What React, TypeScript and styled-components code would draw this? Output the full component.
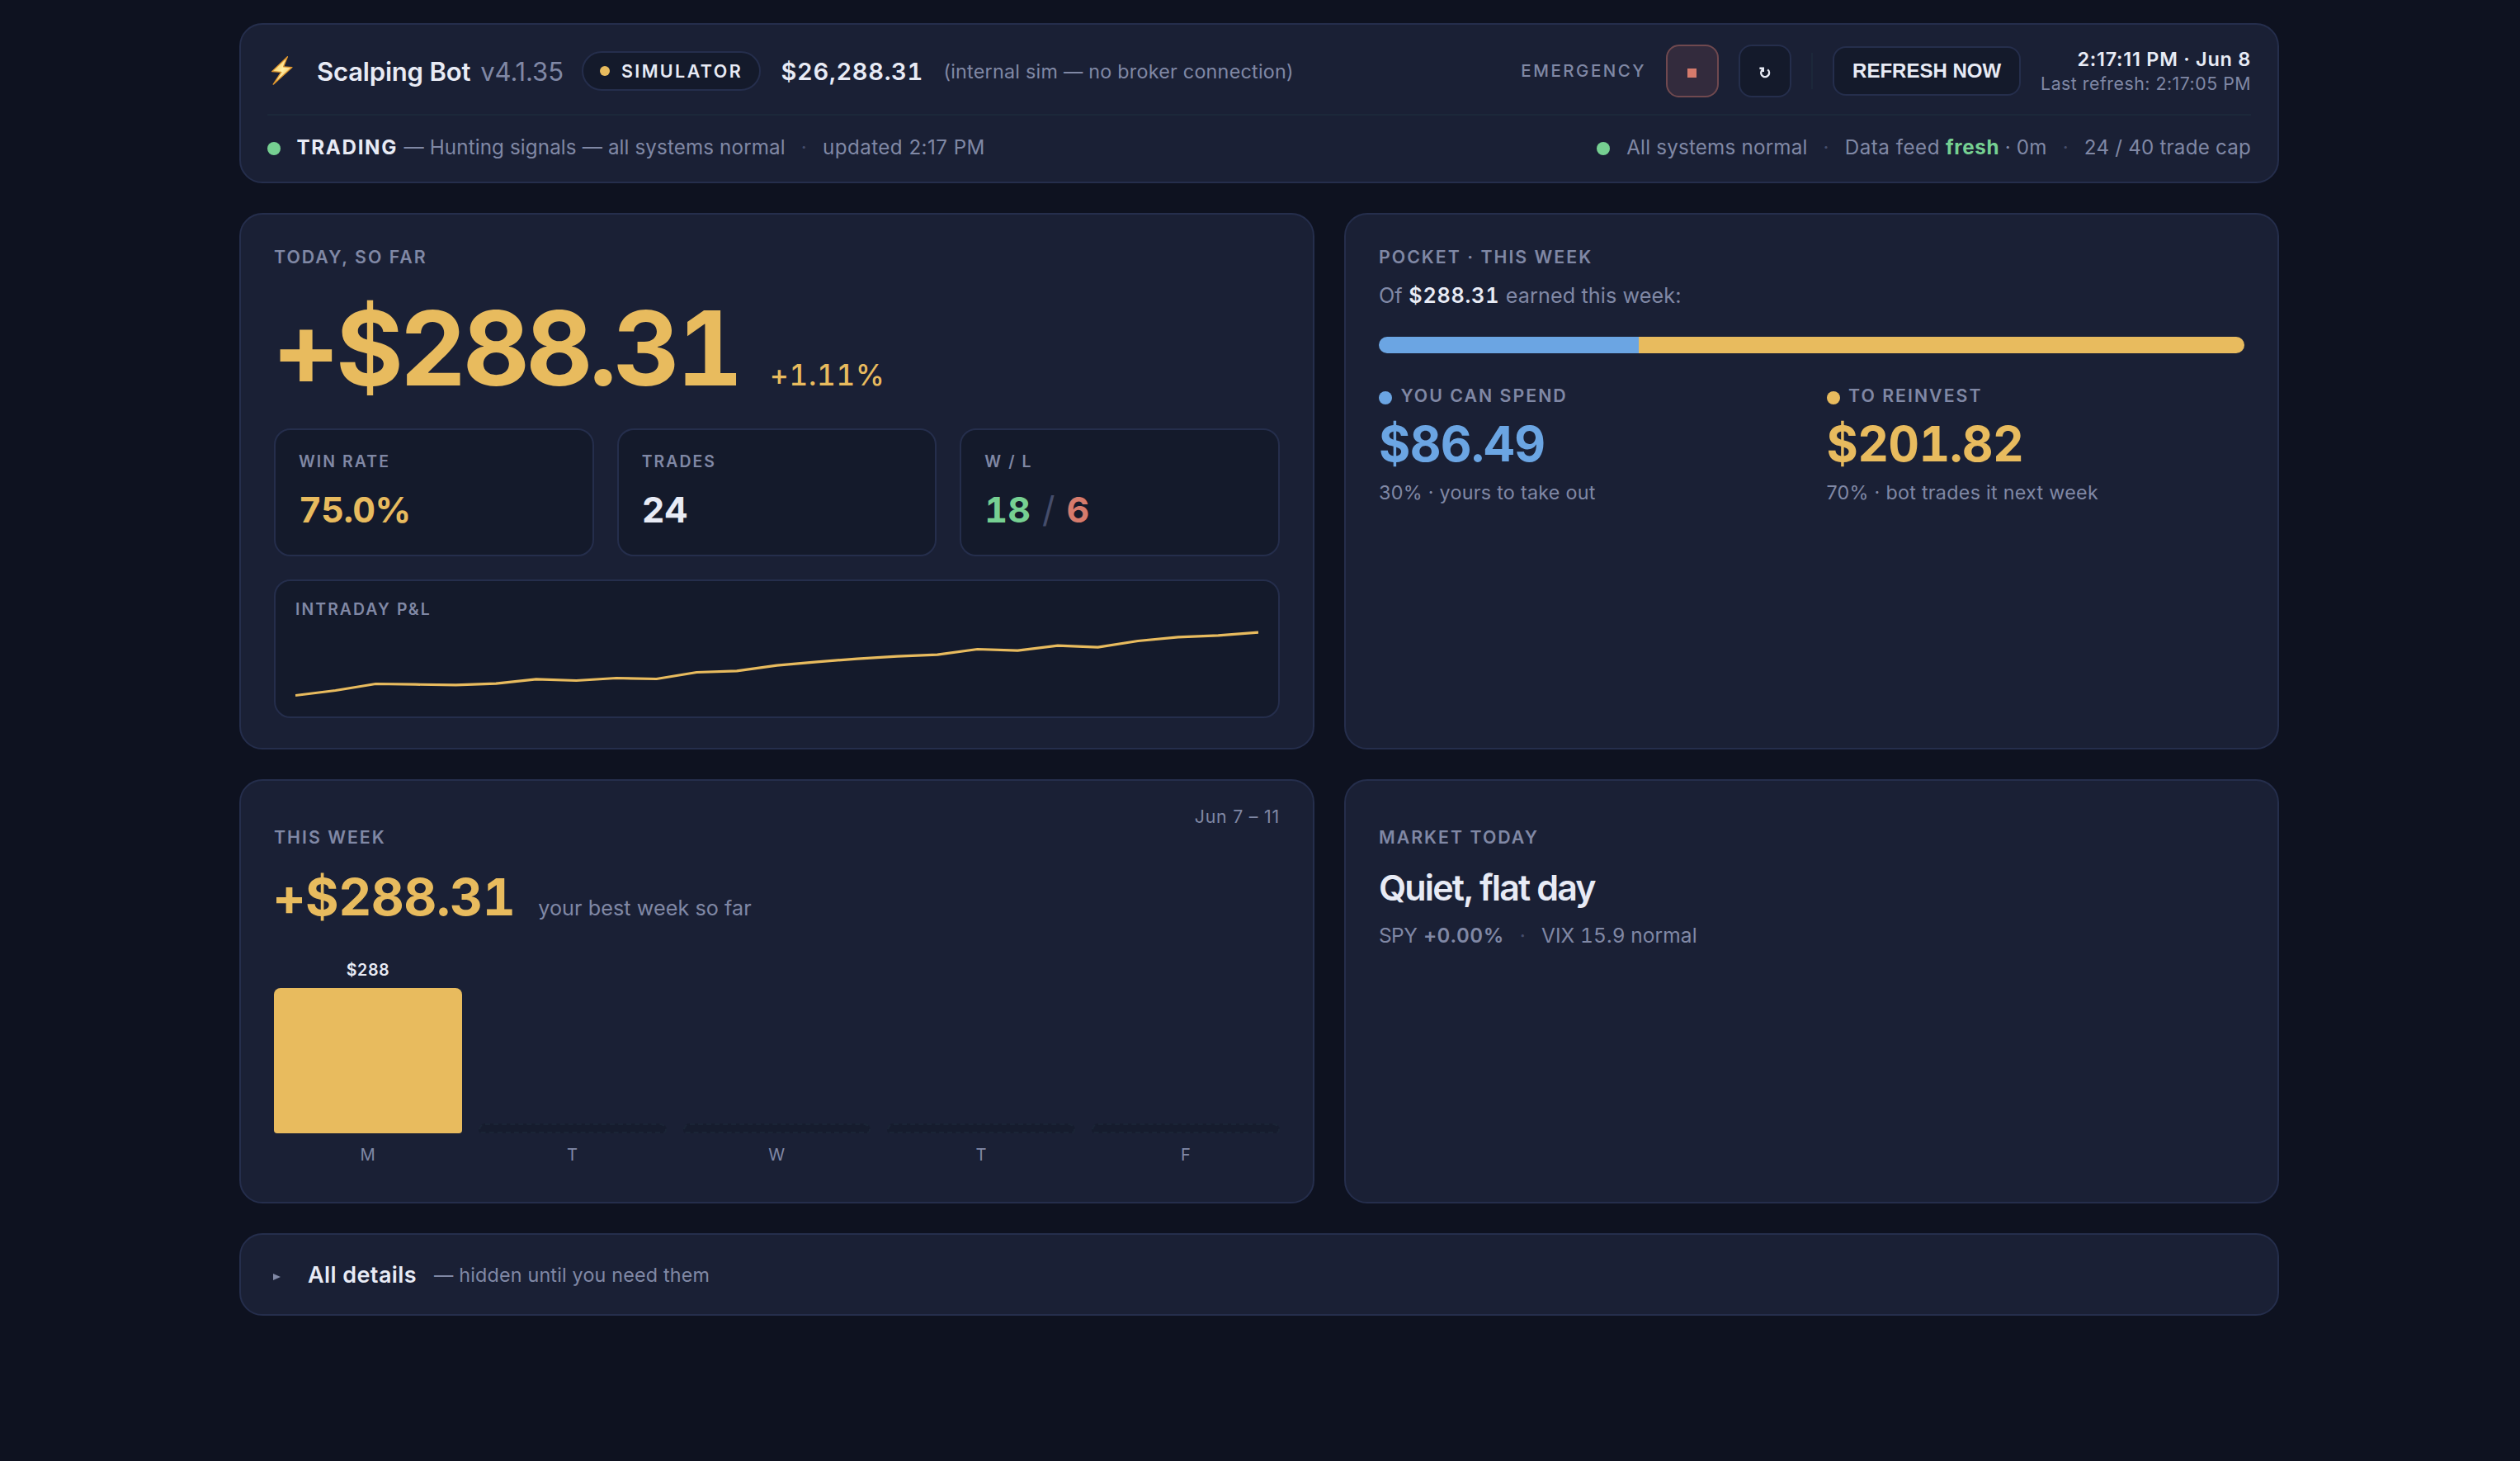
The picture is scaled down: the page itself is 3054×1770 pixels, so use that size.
import React from "react";
import styled, { createGlobalStyle, css } from "styled-components";

const c = {
  page: "#0e1220",
  card: "#1a2035",
  inset: "#141a2b",
  border: "#252e4c",
  hairline: "#1c283a",
  text: "#e8ebf5",
  muted: "#8088a5",
  faint: "#454d6b",
  gold: "#e8bb5e",
  blue: "#6ba5e3",
  green: "#76d092",
  red: "#d67b6c",
};

const type = (size: number, weight: number, spacing: number, line: number) => css`
  font-size: ${size}px;
  font-weight: ${weight};
  letter-spacing: ${spacing}px;
  line-height: ${line}px;
`;

const GlobalStyle = createGlobalStyle`
  * { box-sizing: border-box; }
  body {
    margin: 0;
    background: ${c.page};
    color: ${c.text};
    font-family: Inter, "Liberation Sans", sans-serif;
    -webkit-font-smoothing: antialiased;
  }
`;

const Page = styled.main`
  width: 2472px;
  min-height: 1770px;
  margin: 0 0 0 290px;
  padding-top: 28px;
  display: flex;
  flex-direction: column;
  gap: 36px;
  white-space: nowrap;
`;

const Card = styled.section<{ $height: number; $top: number }>`
  height: ${(p) => p.$height}px;
  padding: ${(p) => p.$top}px 40px 0;
  background: ${c.card};
  border: 2px solid ${c.border};
  border-radius: 28px;
`;

const Columns = styled.div`
  display: grid;
  grid-template-columns: 1303px 1133px;
  gap: 36px;
`;

/* Header */

const Header = styled.header`
  height: 194px;
  padding: 24px 32px 0;
  background: ${c.card};
  border: 2px solid ${c.border};
  border-radius: 28px;
`;

const HeaderRow = styled.div`
  display: flex;
  align-items: center;
  justify-content: space-between;
  height: 64px;
`;

const StatusRow = styled(HeaderRow)`
  height: 58px;
  margin-top: 20px;
  padding-top: 20px;
  border-top: 2px solid ${c.hairline};
  ${type(24.2, 400, 0.2, 37)}
  color: ${c.muted};
`;

const Cluster = styled.div`
  display: flex;
  align-items: center;
`;

const Actions = styled(Cluster)`
  gap: 24px;
`;

const Title = styled.h1`
  margin: 1px 0 0 25px;
  ${type(31, 600, -0.18, 40)}
`;

const Version = styled.span`
  margin: 1px 22.5px 0 12px;
  ${type(31, 400, -0.09, 40)}
  color: ${c.muted};
`;

const Pill = styled.div`
  display: flex;
  align-items: center;
  gap: 13.5px;
  height: 48px;
  padding: 0 20px;
  background: ${c.inset};
  border: 2px solid ${c.border};
  border-radius: 24px;
  ${type(21.5, 600, 2.4, 44)}
`;

const Dot = styled.span<{ $color: string; $size: number; $drop?: number }>`
  flex: none;
  width: ${(p) => p.$size}px;
  height: ${(p) => p.$size}px;
  margin-top: ${(p) => p.$drop ?? 0}px;
  border-radius: 50%;
  background: ${(p) => p.$color};
`;

const Balance = styled.span`
  margin: 1px 24.5px 0 24.5px;
  ${type(29, 600, 0.66, 40)}
  font-variant-numeric: tabular-nums;
`;

const Note = styled.span`
  margin-top: 1px;
  ${type(23.3, 400, 0.25, 32)}
  color: ${c.muted};
`;

const EmergencyLabel = styled.span`
  ${type(20.5, 550, 2.5, 32)}
  color: ${c.muted};
`;

const IconButton = styled.button<{ $danger?: boolean }>`
  display: flex;
  align-items: center;
  justify-content: center;
  width: 64px;
  height: 64px;
  padding: 4px 0 0;
  border-radius: 16px;
  color: ${(p) => (p.$danger ? c.red : c.text)};
  background: ${(p) => (p.$danger ? "#332b3d" : c.inset)};
  border: 2px solid ${(p) => (p.$danger ? "#70494f" : c.border)};
`;

const Square = styled.span`
  width: 11px;
  height: 11px;
  margin-left: -1px;
  background: currentColor;
`;

const Divider = styled.span`
  width: 2px;
  height: 44px;
  background: ${c.hairline};
`;

const RefreshButton = styled.button`
  width: 228px;
  height: 60px;
  padding: 0;
  border-radius: 16px;
  color: ${c.text};
  background: ${c.inset};
  border: 2px solid ${c.border};
  font-family: "Liberation Sans", Arial, sans-serif;
  ${type(24, 700, 0, 36)}
`;

const Clock = styled.div`
  display: flex;
  flex-direction: column;
  align-items: flex-end;
`;

const Now = styled.span`
  ${type(23.5, 600, 0.72, 30)}
`;

const LastRefresh = styled.span`
  ${type(21.3, 400, 0.51, 29)}
  color: ${c.muted};
`;

const State = styled.strong`
  margin: 0 7.5px 0 19.5px;
  color: ${c.text};
  font-weight: 700;
  letter-spacing: 1.65px;
`;

const StatusText = styled.span<{ $ls?: number; $left?: number }>`
  margin-left: ${(p) => p.$left ?? 0}px;
  letter-spacing: ${(p) => p.$ls ?? 0.2}px;
`;

const Fresh = styled.strong`
  margin: 0 6.5px 0 7px;
  color: ${c.green};
  font-weight: 700;
  letter-spacing: 0.65px;
`;

const Sep = styled.span`
  margin: 0 19px;
  color: ${c.faint};
`;

/* Shared card text */

const Label = styled.h2`
  margin: 0;
  ${type(21.3, 600, 2.02, 31)}
  color: ${c.muted};
`;

const SmallLabel = styled.div`
  ${type(19.4, 600, 2.08, 28)}
  color: ${c.muted};
`;

const Baseline = styled.div`
  display: flex;
  align-items: baseline;
`;

/* Today */

const HeroLine = styled(Baseline)`
  height: 125px;
  margin: 32px 0 35px;
  color: ${c.gold};
  font-variant-numeric: tabular-nums;
`;

const HeroAmount = styled.span`
  margin: 0 36.5px 0 -1.5px;
  ${type(125, 700, -4.3, 125)}
`;

const HeroPercent = styled.span`
  ${type(35, 550, 0.82, 44)}
`;

const Stats = styled.div`
  display: grid;
  grid-template-columns: repeat(3, 1fr);
  gap: 28px;
`;

const Stat = styled.div`
  height: 155px;
  padding: 24px 28px 0;
  background: ${c.inset};
  border: 2px solid ${c.border};
  border-radius: 20px;
`;

const StatValue = styled.div<{ $color?: string; $ls?: number }>`
  display: flex;
  gap: 14px;
  margin-top: 18.5px;
  ${type(43, 650, 0, 50)}
  letter-spacing: ${(p) => p.$ls ?? 0}px;
  color: ${(p) => p.$color ?? c.text};
  font-variant-numeric: tabular-nums;
`;

const Tone = styled.span<{ $color: string; $weight?: number }>`
  color: ${(p) => p.$color};
  font-weight: ${(p) => p.$weight ?? 650};
`;

const ChartBox = styled.div`
  height: 168px;
  margin-top: 28px;
  padding: 20px 24px 0;
  background: ${c.inset};
  border: 2px solid ${c.border};
  border-radius: 20px;
`;

const ChartSvg = styled.svg`
  display: block;
  width: 100%;
  height: 96px;
`;

/* Pocket */

const Earned = styled.p`
  display: flex;
  gap: 7.5px;
  margin: 13px 0 32px;
  ${type(25.2, 400, 0.1, 36)}
  color: ${c.muted};

  strong {
    color: ${c.text};
    font-weight: 600;
    letter-spacing: 0.75px;
    font-variant-numeric: tabular-nums;
  }
`;

const SplitBar = styled.div`
  display: flex;
  height: 20px;
  border-radius: 10px;
  overflow: hidden;
`;

const SplitPart = styled.span<{ $color: string; $share: number }>`
  flex: ${(p) => p.$share} 0 0;
  background: ${(p) => p.$color};
`;

const SplitGrid = styled.div`
  display: grid;
  grid-template-columns: 1fr 1fr;
  gap: 36px;
  margin-top: 36px;
`;

const LegendLabel = styled(Label)`
  display: flex;
  align-items: center;
  gap: 10.5px;
`;

const PocketAmount = styled.div<{ $color: string }>`
  margin: 13px 0;
  ${type(58.5, 700, -0.65, 60)}
  color: ${(p) => p.$color};
  font-variant-numeric: tabular-nums;
`;

const PocketNote = styled.div`
  ${type(23.3, 400, 0.28, 32)}
  color: ${c.muted};
`;

/* Week */

const CardHead = styled.div`
  display: flex;
  justify-content: space-between;

  ${Label} {
    margin-top: 24px;
  }
`;

const Range = styled.span`
  ${type(21.3, 400, 0.8, 29)}
  color: ${c.muted};
`;

const WeekLine = styled(Baseline)`
  height: 62px;
  margin-top: 26px;
`;

const WeekAmount = styled.span`
  margin: 0 28px 0 -1.5px;
  ${type(62, 700, -0.5, 62)}
  color: ${c.gold};
  font-variant-numeric: tabular-nums;
`;

const WeekNote = styled.span`
  ${type(25.2, 400, 0.05, 36)}
  color: ${c.muted};
`;

const Bars = styled.div`
  display: grid;
  grid-template-columns: repeat(5, 1fr);
  gap: 20px;
  align-items: end;
  margin-top: 44px;
`;

const Day = styled.div`
  display: flex;
  flex-direction: column;
  text-align: center;
`;

const BarValue = styled.span`
  margin-bottom: 9px;
  ${type(19.6, 600, 0.39, 26)}
  font-variant-numeric: tabular-nums;
`;

const Bar = styled.span<{ $height: number }>`
  height: ${(p) => p.$height}px;
  background: ${c.gold};
  border-radius: 8px 8px 4px 4px;
`;

const EmptyBar = styled.span`
  height: 12px;
  background: #161c2e;
  border: 2px dashed #1a2436;
  border-radius: 8px 8px 4px 4px;
`;

const DayName = styled.span`
  margin-top: 12px;
  ${type(20.2, 400, 0.4, 28)}
  color: ${c.muted};
`;

/* Market */

const Mood = styled.div`
  margin-top: 20px;
  ${type(43, 600, -1.88, 50)}
`;

const MarketLine = styled.div`
  display: flex;
  margin-top: 16px;
  ${type(24.5, 400, 0.08, 34)}
  color: ${c.muted};
  font-variant-numeric: tabular-nums;
`;

const Ticker = styled.span`
  margin-right: 8px;
  letter-spacing: -0.6px;
`;

const Change = styled.strong`
  font-weight: 600;
  letter-spacing: 0.5px;
`;

/* Details */

const Details = styled.section`
  display: flex;
  align-items: center;
  height: 100px;
  padding: 1px 0 0 39px;
  background: ${c.card};
  border: 2px solid ${c.border};
  border-radius: 28px;
`;

const Caret = styled.svg`
  width: 9px;
  height: 8px;
  margin: 4px 33px 0 0;
  fill: ${c.muted};
`;

const DetailsTitle = styled.span`
  margin-right: 21px;
  ${type(27, 600, 0.41, 36)}
`;

const DetailsNote = styled.span`
  ${type(23.3, 400, 0.19, 32)}
  color: ${c.muted};
`;

const pnl = [
  91, 85, 77, 77.7, 78.3, 76.7, 71.3, 73, 70, 71, 63, 61.3, 54.7, 50.3, 46.6, 43.7, 41.7, 35, 36.7,
  30.7, 32.7, 25, 20.3, 18.3, 14.7,
];

const days = [
  { name: "M", value: 288 },
  { name: "T", value: 0 },
  { name: "W", value: 0 },
  { name: "T", value: 0 },
  { name: "F", value: 0 },
];

const Bolt = () => (
  <svg width="35" height="36" viewBox="0 0 35 36">
    <defs>
      <linearGradient id="bolt" x1="0" y1="0" x2="1" y2="1">
        <stop offset="0" stopColor="#f3b43c" />
        <stop offset="0.5" stopColor="#fff0a6" />
        <stop offset="1" stopColor="#f0a02c" />
      </linearGradient>
    </defs>
    <path
      d="M24.4 0.7 L5.6 18.6 L16.8 19.3 L7.2 34.2 L30 13.6 L19.6 12.8 Z"
      fill="url(#bolt)"
      stroke="#dd942d"
      strokeWidth="1.3"
      strokeLinejoin="round"
    />
  </svg>
);

const RefreshGlyph = () => (
  <svg width="14" height="14" viewBox="0 0 14 14" fill="none" stroke="currentColor" strokeWidth="2.4">
    <path d="M10.2 3.4 A4.9 4.9 0 1 1 2.8 5 L4.4 2.6" />
    <path d="M0.4 1.8 H4.8 V6" />
  </svg>
);

const PnlChart = () => (
  <ChartSvg viewBox="0 1 1167 96" preserveAspectRatio="none">
    <polyline
      points={pnl.map((y, i) => `${((i * 1167) / (pnl.length - 1)).toFixed(1)},${y + 0.5}`).join(" ")}
      fill="none"
      stroke={c.gold}
      strokeWidth="3.2"
      strokeLinejoin="round"
    />
  </ChartSvg>
);

export default function App() {
  return (
    <>
      <GlobalStyle />
      <Page>
        <Header>
          <HeaderRow>
            <Cluster>
              <Bolt />
              <Title>Scalping Bot</Title>
              <Version>v4.1.35</Version>
              <Pill>
                <Dot $color={c.gold} $size={12} />
                SIMULATOR
              </Pill>
              <Balance>$26,288.31</Balance>
              <Note>(internal sim — no broker connection)</Note>
            </Cluster>
            <Actions>
              <EmergencyLabel>EMERGENCY</EmergencyLabel>
              <IconButton $danger aria-label="Stop">
                <Square />
              </IconButton>
              <IconButton aria-label="Restart">
                <RefreshGlyph />
              </IconButton>
              <Divider />
              <RefreshButton>REFRESH NOW</RefreshButton>
              <Clock>
                <Now>2:17:11 PM · Jun 8</Now>
                <LastRefresh>Last refresh: 2:17:05 PM</LastRefresh>
              </Clock>
            </Actions>
          </HeaderRow>
          <StatusRow>
            <Cluster>
              <Dot $color={c.green} $size={16} $drop={4} />
              <State>TRADING</State>
              <StatusText $ls={0.12}>— Hunting signals — all systems normal</StatusText>
              <Sep>·</Sep>
              <StatusText $ls={0.45}>updated 2:17 PM</StatusText>
            </Cluster>
            <Cluster>
              <Dot $color={c.green} $size={16} $drop={4} />
              <StatusText $left={20}>All systems normal</StatusText>
              <Sep>·</Sep>
              <StatusText $ls={0.5}>Data feed</StatusText>
              <Fresh>fresh</Fresh>
              <StatusText>· 0m</StatusText>
              <Sep>·</Sep>
              <StatusText>24 / 40 trade cap</StatusText>
            </Cluster>
          </StatusRow>
        </Header>

        <Columns>
          <Card $height={650} $top={36}>
            <Label>TODAY, SO FAR</Label>
            <HeroLine>
              <HeroAmount>+$288.31</HeroAmount>
              <HeroPercent>+1.11%</HeroPercent>
            </HeroLine>
            <Stats>
              <Stat>
                <SmallLabel>WIN RATE</SmallLabel>
                <StatValue $color={c.gold} $ls={-0.6}>75.0%</StatValue>
              </Stat>
              <Stat>
                <SmallLabel>TRADES</SmallLabel>
                <StatValue>24</StatValue>
              </Stat>
              <Stat>
                <SmallLabel>W / L</SmallLabel>
                <StatValue>
                  <Tone $color={c.green}>18</Tone>
                  <Tone $color={c.faint} $weight={400}>/</Tone>
                  <Tone $color={c.red}>6</Tone>
                </StatValue>
              </Stat>
            </Stats>
            <ChartBox>
              <SmallLabel>INTRADAY P&amp;L</SmallLabel>
              <PnlChart />
            </ChartBox>
          </Card>

          <Card $height={650} $top={36}>
            <Label>POCKET · THIS WEEK</Label>
            <Earned>
              <span>Of</span>
              <strong>$288.31</strong>
              <span>earned this week:</span>
            </Earned>
            <SplitBar>
              <SplitPart $color={c.blue} $share={30} />
              <SplitPart $color={c.gold} $share={70} />
            </SplitBar>
            <SplitGrid>
              <div>
                <LegendLabel>
                  <Dot $color={c.blue} $size={16} $drop={5} />
                  YOU CAN SPEND
                </LegendLabel>
                <PocketAmount $color={c.blue}>$86.49</PocketAmount>
                <PocketNote>30% · yours to take out</PocketNote>
              </div>
              <div>
                <LegendLabel>
                  <Dot $color={c.gold} $size={16} $drop={5} />
                  TO REINVEST
                </LegendLabel>
                <PocketAmount $color={c.gold}>$201.82</PocketAmount>
                <PocketNote>70% · bot trades it next week</PocketNote>
              </div>
            </SplitGrid>
          </Card>

          <Card $height={514} $top={29}>
            <CardHead>
              <Label>THIS WEEK</Label>
              <Range>Jun 7 – 11</Range>
            </CardHead>
            <WeekLine>
              <WeekAmount>+$288.31</WeekAmount>
              <WeekNote>your best week so far</WeekNote>
            </WeekLine>
            <Bars>
              {days.map((d, i) => (
                <Day key={i}>
                  {d.value > 0 ? (
                    <>
                      <BarValue>${d.value}</BarValue>
                      <Bar $height={176} />
                    </>
                  ) : (
                    <EmptyBar />
                  )}
                  <DayName>{d.name}</DayName>
                </Day>
              ))}
            </Bars>
          </Card>

          <Card $height={514} $top={29}>
            <CardHead>
              <Label>MARKET TODAY</Label>
            </CardHead>
            <Mood>Quiet, flat day</Mood>
            <MarketLine>
              <Ticker>SPY</Ticker>
              <Change>+0.00%</Change>
              <Sep>·</Sep>
              <span>VIX 15.9 normal</span>
            </MarketLine>
          </Card>
        </Columns>

        <Details>
          <Caret viewBox="0 0 9 8">
            <path d="M0 0 L9 4 L0 8 Z" />
          </Caret>
          <DetailsTitle>All details</DetailsTitle>
          <DetailsNote>— hidden until you need them</DetailsNote>
        </Details>
      </Page>
    </>
  );
}
